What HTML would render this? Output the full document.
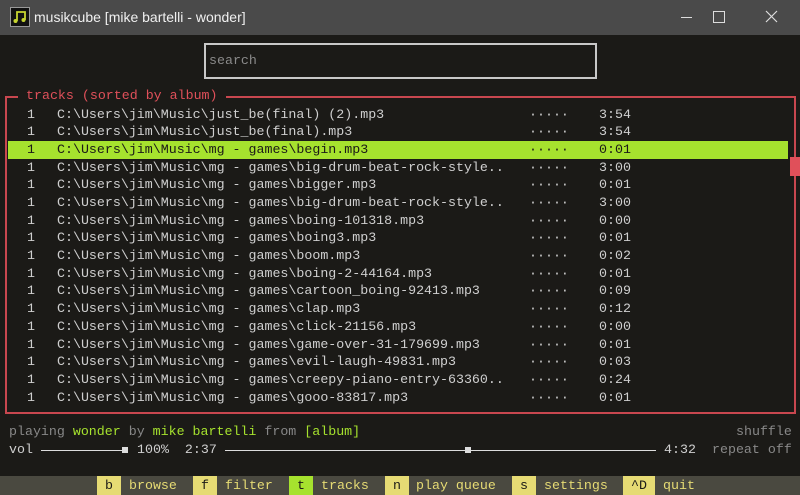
<!DOCTYPE html>
<html><head><meta charset="utf-8"><style>
*{margin:0;padding:0;box-sizing:border-box}
body{width:800px;height:495px;overflow:hidden;background:#1b1a17;font-family:"Liberation Mono",monospace;font-size:13.3px;color:#cfcfcf;position:relative}
.t{position:absolute;white-space:pre}
#title{position:absolute;left:0;top:0;width:800px;height:35px;background:#4a4a4a}
#rows{position:absolute;left:8px;top:105.6px;width:780px}
.r{height:17.7px;line-height:17.7px;position:relative;white-space:pre}
.r span{position:absolute;top:0}
.hl{background:#a6e22e;color:#1b1a17}
.k{position:absolute;top:476px;height:19px;line-height:19px;white-space:pre;color:#e6db74}
.kb{background:#e6db74;color:#1b1a17;text-align:center}
</style></head><body>
<div id="title"></div>
<div style="position:absolute;left:10px;top:7px;width:20px;height:20px;background:#111;border:1px solid #999"></div>
<svg style="position:absolute;left:12px;top:9px" width="16" height="16" viewBox="0 0 16 16"><path d="M5 12V3h8v8" stroke="#c6d430" stroke-width="1.8" fill="none"/><circle cx="3.5" cy="12" r="2" fill="#c6d430"/><circle cx="11.5" cy="11" r="2" fill="#c6d430"/></svg>
<div class="t" style="left:34px;top:9px;font-family:'Liberation Sans',sans-serif;font-size:14px;color:#f0f0f0">musikcube [mike bartelli - wonder]</div>
<div style="position:absolute;left:681px;top:17px;width:11px;height:1px;background:#ddd"></div>
<div style="position:absolute;left:713px;top:11px;width:12px;height:12px;border:1px solid #ddd"></div>
<svg style="position:absolute;left:765px;top:10px" width="13" height="13"><path d="M1 1L12 12M12 1L1 12" stroke="#ddd" stroke-width="1.2"/></svg>
<div style="position:absolute;left:204px;top:43px;width:393px;height:36px;border:2px solid #c8c8c8"></div>
<div class="t" style="left:209px;top:53px;color:#8a8a8a">search</div>
<div style="position:absolute;left:5px;top:96px;width:791px;height:318px;border:2px solid #c8474f"></div>
<div class="t" style="left:18px;top:88px;background:#1b1a17;color:#e0505a;padding:0 8px">tracks (sorted by album)</div>
<div style="position:absolute;left:790px;top:157px;width:10px;height:19px;background:#e0505a"></div>
<div id="rows">
<div class="r"><span style="left:19px">1</span><span style="left:49px">C:\Users\jim\Music\just_be(final) (2).mp3</span><span style="left:521px">·····</span><span style="left:591px">3:54</span></div>
<div class="r"><span style="left:19px">1</span><span style="left:49px">C:\Users\jim\Music\just_be(final).mp3</span><span style="left:521px">·····</span><span style="left:591px">3:54</span></div>
<div class="r hl"><span style="left:19px">1</span><span style="left:49px">C:\Users\jim\Music\mg - games\begin.mp3</span><span style="left:521px">·····</span><span style="left:591px">0:01</span></div>
<div class="r"><span style="left:19px">1</span><span style="left:49px">C:\Users\jim\Music\mg - games\big-drum-beat-rock-style..</span><span style="left:521px">·····</span><span style="left:591px">3:00</span></div>
<div class="r"><span style="left:19px">1</span><span style="left:49px">C:\Users\jim\Music\mg - games\bigger.mp3</span><span style="left:521px">·····</span><span style="left:591px">0:01</span></div>
<div class="r"><span style="left:19px">1</span><span style="left:49px">C:\Users\jim\Music\mg - games\big-drum-beat-rock-style..</span><span style="left:521px">·····</span><span style="left:591px">3:00</span></div>
<div class="r"><span style="left:19px">1</span><span style="left:49px">C:\Users\jim\Music\mg - games\boing-101318.mp3</span><span style="left:521px">·····</span><span style="left:591px">0:00</span></div>
<div class="r"><span style="left:19px">1</span><span style="left:49px">C:\Users\jim\Music\mg - games\boing3.mp3</span><span style="left:521px">·····</span><span style="left:591px">0:01</span></div>
<div class="r"><span style="left:19px">1</span><span style="left:49px">C:\Users\jim\Music\mg - games\boom.mp3</span><span style="left:521px">·····</span><span style="left:591px">0:02</span></div>
<div class="r"><span style="left:19px">1</span><span style="left:49px">C:\Users\jim\Music\mg - games\boing-2-44164.mp3</span><span style="left:521px">·····</span><span style="left:591px">0:01</span></div>
<div class="r"><span style="left:19px">1</span><span style="left:49px">C:\Users\jim\Music\mg - games\cartoon_boing-92413.mp3</span><span style="left:521px">·····</span><span style="left:591px">0:09</span></div>
<div class="r"><span style="left:19px">1</span><span style="left:49px">C:\Users\jim\Music\mg - games\clap.mp3</span><span style="left:521px">·····</span><span style="left:591px">0:12</span></div>
<div class="r"><span style="left:19px">1</span><span style="left:49px">C:\Users\jim\Music\mg - games\click-21156.mp3</span><span style="left:521px">·····</span><span style="left:591px">0:00</span></div>
<div class="r"><span style="left:19px">1</span><span style="left:49px">C:\Users\jim\Music\mg - games\game-over-31-179699.mp3</span><span style="left:521px">·····</span><span style="left:591px">0:01</span></div>
<div class="r"><span style="left:19px">1</span><span style="left:49px">C:\Users\jim\Music\mg - games\evil-laugh-49831.mp3</span><span style="left:521px">·····</span><span style="left:591px">0:03</span></div>
<div class="r"><span style="left:19px">1</span><span style="left:49px">C:\Users\jim\Music\mg - games\creepy-piano-entry-63360..</span><span style="left:521px">·····</span><span style="left:591px">0:24</span></div>
<div class="r"><span style="left:19px">1</span><span style="left:49px">C:\Users\jim\Music\mg - games\gooo-83817.mp3</span><span style="left:521px">·····</span><span style="left:591px">0:01</span></div>
</div>
<div class="t" style="left:9px;top:424px;color:#888">playing <span style="color:#a6e22e">wonder</span> by <span style="color:#a6e22e">mike bartelli</span> from <span style="color:#a6e22e">[album]</span></div>
<div class="t" style="left:736px;top:424px;color:#888">shuffle</div>
<div class="t" style="left:9px;top:442px">vol</div>
<div style="position:absolute;left:41px;top:450px;width:82px;height:1px;background:#ddd"></div>
<div style="position:absolute;left:122px;top:447px;width:6px;height:6px;background:#ddd"></div>
<div class="t" style="left:137px;top:442px">100%  2:37</div>
<div style="position:absolute;left:225px;top:450px;width:431px;height:1px;background:#ddd"></div>
<div style="position:absolute;left:465px;top:447px;width:6px;height:6px;background:#ddd"></div>
<div class="t" style="left:664px;top:442px">4:32</div>
<div class="t" style="left:712px;top:442px;color:#888">repeat off</div>
<div style="position:absolute;left:0;top:476px;width:800px;height:19px;background:#4a4940"></div>
<div class="k kb" style="left:97px;width:24px">b</div><div class="k" style="left:129px">browse</div>
<div class="k kb" style="left:193px;width:24px">f</div><div class="k" style="left:225px">filter</div>
<div class="k kb" style="left:289px;width:24px;background:#a6e22e">t</div><div class="k" style="left:321px">tracks</div>
<div class="k kb" style="left:385px;width:24px">n</div><div class="k" style="left:416px">play queue</div>
<div class="k kb" style="left:512px;width:24px">s</div><div class="k" style="left:544px">settings</div>
<div class="k kb" style="left:623px;width:32px">^D</div><div class="k" style="left:663px">quit</div>
</body></html>
